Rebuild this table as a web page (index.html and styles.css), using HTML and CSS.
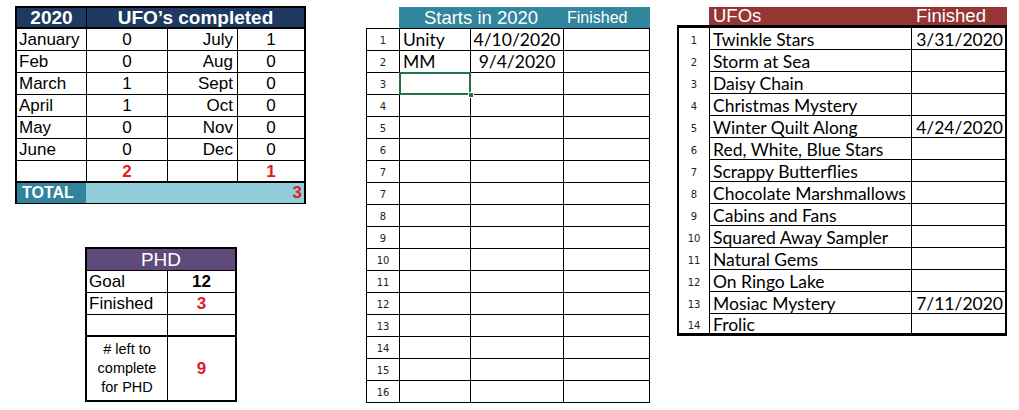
FILE: index.html
```html
<!DOCTYPE html>
<html lang="en">
<head>
<meta charset="utf-8">
<title>UFO tracker 2020</title>
<link rel="stylesheet" href="styles.css">
</head>
<body>
<main class="page">
  <div class="left">
    <section class="ufo-table">
      <div class="cell hd">2020</div>
      <div class="cell hd title">UFO’s completed</div>

      <div class="cell">January</div><div class="cell c">0</div><div class="cell r">July</div><div class="cell c">1</div>
      <div class="cell">Feb</div><div class="cell c">0</div><div class="cell r">Aug</div><div class="cell c">0</div>
      <div class="cell">March</div><div class="cell c">1</div><div class="cell r">Sept</div><div class="cell c">0</div>
      <div class="cell">April</div><div class="cell c">1</div><div class="cell r">Oct</div><div class="cell c">0</div>
      <div class="cell">May</div><div class="cell c">0</div><div class="cell r">Nov</div><div class="cell c">0</div>
      <div class="cell">June</div><div class="cell c">0</div><div class="cell r">Dec</div><div class="cell c">0</div>
      <div class="cell sub"></div><div class="cell sub c red">2</div><div class="cell sub"></div><div class="cell sub c red">1</div>

      <div class="total">
        <div class="total-label">TOTAL</div>
        <div class="total-val red">3</div>
      </div>
    </section>

    <section class="phd">
      <div class="cell phd-hd">PHD</div>
      <div class="cell">Goal</div><div class="cell c bold">12</div>
      <div class="cell">Finished</div><div class="cell c red">3</div>
      <div class="cell sub"></div><div class="cell sub"></div>
      <div class="cell c multi">#&nbsp;left to<br>complete<br>for PHD</div><div class="cell c red">9</div>
    </section>
  </div>

  <div class="mid">
    <div class="mid-head">
      <div class="mid-h1">Starts in 2020</div>
      <div class="mid-h2">Finished</div>
    </div>
    <section class="mid-body">
      <div class="n">1</div><div class="t">Unity</div><div class="t c">4/10/2020</div><div class="t"></div>
      <div class="n">2</div><div class="t">MM</div><div class="t c">9/4/2020</div><div class="t"></div>
      <div class="n">3</div><div class="t sel"></div><div class="t"></div><div class="t"></div>
      <div class="n">4</div><div class="t"></div><div class="t"></div><div class="t"></div>
      <div class="n">5</div><div class="t"></div><div class="t"></div><div class="t"></div>
      <div class="n">6</div><div class="t"></div><div class="t"></div><div class="t"></div>
      <div class="n">7</div><div class="t"></div><div class="t"></div><div class="t"></div>
      <div class="n">7</div><div class="t"></div><div class="t"></div><div class="t"></div>
      <div class="n">8</div><div class="t"></div><div class="t"></div><div class="t"></div>
      <div class="n">9</div><div class="t"></div><div class="t"></div><div class="t"></div>
      <div class="n">10</div><div class="t"></div><div class="t"></div><div class="t"></div>
      <div class="n">11</div><div class="t"></div><div class="t"></div><div class="t"></div>
      <div class="n">12</div><div class="t"></div><div class="t"></div><div class="t"></div>
      <div class="n">13</div><div class="t"></div><div class="t"></div><div class="t"></div>
      <div class="n">14</div><div class="t"></div><div class="t"></div><div class="t"></div>
      <div class="n">15</div><div class="t"></div><div class="t"></div><div class="t"></div>
      <div class="n">16</div><div class="t"></div><div class="t"></div><div class="t"></div>
    </section>
  </div>

  <div class="rt">
    <div class="rt-head">
      <div class="rt-h1">UFOs</div>
      <div class="rt-h2">Finished</div>
    </div>
    <section class="rt-body">
      <div class="rn">1</div><div class="rc">Twinkle Stars</div><div class="rc rd">3/31/2020</div>
      <div class="rn">2</div><div class="rc">Storm at Sea</div><div class="rc rd"></div>
      <div class="rn">3</div><div class="rc">Daisy Chain</div><div class="rc rd"></div>
      <div class="rn">4</div><div class="rc">Christmas Mystery</div><div class="rc rd"></div>
      <div class="rn">5</div><div class="rc">Winter Quilt Along</div><div class="rc rd">4/24/2020</div>
      <div class="rn">6</div><div class="rc">Red, White, Blue Stars</div><div class="rc rd"></div>
      <div class="rn">7</div><div class="rc">Scrappy Butterflies</div><div class="rc rd"></div>
      <div class="rn">8</div><div class="rc">Chocolate Marshmallows</div><div class="rc rd"></div>
      <div class="rn">9</div><div class="rc">Cabins and Fans</div><div class="rc rd"></div>
      <div class="rn">10</div><div class="rc">Squared Away Sampler</div><div class="rc rd"></div>
      <div class="rn">11</div><div class="rc">Natural Gems</div><div class="rc rd"></div>
      <div class="rn">12</div><div class="rc">On Ringo Lake</div><div class="rc rd"></div>
      <div class="rn">13</div><div class="rc">Mosiac Mystery</div><div class="rc rd">7/11/2020</div>
      <div class="rn last">14</div><div class="rc last">Frolic</div><div class="rc rd last"></div>
    </section>
  </div>
</main>
</body>
</html>
```

FILE: styles.css
```css
html, body {
  margin: 0;
  padding: 0;
  background: #fff;
}

body {
  font-family: "Liberation Sans", Arial, sans-serif;
  color: #000;
}

.page {
  display: flex;
  align-items: flex-start;
}

/* ---------- left column ---------- */
.left {
  display: flex;
  flex-direction: column;
  align-items: flex-start;
  margin-left: 15px;
  margin-top: 6px;
}

.cell {
  background: #fff;
  display: flex;
  align-items: center;
  padding: 0 2px;
  font-size: 17px;
  line-height: 1;
  white-space: nowrap;
  overflow: hidden;
  box-sizing: border-box;
}

.cell.c { justify-content: center; }
.cell.r { justify-content: flex-end; padding-right: 4px; }
.red { color: #e31b23; font-weight: bold; }
.bold { font-weight: bold; }

.ufo-table {
  display: grid;
  grid-template-columns: 69px 80px 69px 66px;
  grid-template-rows: 20px repeat(7, 21px) 19px;
  gap: 1px;
  background: #000;
  border: 2px solid #000;
}

.hd {
  background: #1f3a60;
  color: #fff;
  font-weight: bold;
  font-size: 19px;
  justify-content: center;
  border-bottom: 1px solid #000;
}

.hd.title {
  grid-column: 2 / 5;
}

.sub {
  border-bottom: 1px solid #000;
}

.total {
  grid-column: 1 / -1;
  display: grid;
  grid-template-columns: 69px 1fr;
}

.total-label {
  background: #31849b;
  color: #fff;
  font-weight: bold;
  font-size: 16px;
  display: flex;
  align-items: center;
  padding-left: 5px;
}

.total-val {
  background: #92cddc;
  display: flex;
  align-items: center;
  justify-content: flex-end;
  padding-right: 2px;
  font-size: 17px;
}

.phd {
  display: grid;
  grid-template-columns: 80px 67px;
  grid-template-rows: 21px 21px 21px 21px 63px;
  gap: 1px;
  background: #000;
  border: 2px solid #000;
  margin: 43px 0 0 70px;
}

.phd-hd {
  grid-column: 1 / -1;
  background: #604a7b;
  color: #fff;
  font-size: 19px;
  justify-content: center;
}

.multi {
  white-space: normal;
  text-align: center;
  font-size: 14.5px;
  line-height: 19px;
}

/* ---------- middle table ---------- */
.mid {
  margin-left: 60px;
  margin-top: 7px;
}

.mid-head {
  display: grid;
  grid-template-columns: 164px 86px;
  margin-left: 33px;
  height: 21px;
  background: #31859c;
  color: #fff;
}

.mid-h1 {
  font-size: 18.5px;
  display: flex;
  align-items: center;
  justify-content: center;
}

.mid-h2 {
  font-size: 16px;
  display: flex;
  align-items: center;
  padding-left: 4px;
}

.mid-body {
  display: grid;
  grid-template-columns: 32px 70px 92px 85px;
  grid-auto-rows: 21px;
  gap: 1px;
  background: #000;
  border: 1px solid #000;
}

.n, .rn {
  background: #fff;
  font-family: "DejaVu Sans", Verdana, sans-serif;
  font-size: 10px;
  color: #222;
  display: flex;
  align-items: center;
  justify-content: center;
  padding-top: 2px;
  box-sizing: border-box;
}

.t {
  background: #fff;
  font-family: Lato, "Liberation Sans", sans-serif;
  font-size: 17.5px;
  display: flex;
  align-items: center;
  padding-left: 3px;
  white-space: nowrap;
}

.t.c {
  justify-content: center;
  padding-left: 0;
}

.sel {
  position: relative;
}

.sel::before {
  content: "";
  position: absolute;
  left: -1px;
  top: -1px;
  right: -1px;
  bottom: -1px;
  border: 2px solid #217346;
  z-index: 1;
}

.sel::after {
  content: "";
  position: absolute;
  right: -4px;
  bottom: -4px;
  width: 6px;
  height: 6px;
  background: #217346;
  border: 1px solid #fff;
  box-sizing: border-box;
  z-index: 2;
}

/* ---------- right table ---------- */
.rt {
  margin-left: 27px;
  margin-top: 7px;
}

.rt-head {
  display: grid;
  grid-template-columns: 202px 96px;
  margin-left: 32px;
  height: 18px;
  background: #963634;
  color: #fff;
  font-size: 18.5px;
  line-height: 18px;
}

.rt-h1 { padding-left: 4px; }
.rt-h2 { padding-left: 5px; }

.rt-body {
  display: grid;
  grid-template-columns: 30px 202px 94px;
  grid-template-rows: repeat(13, 22px) 19px;
  border: 3px solid #000;
  border-left-width: 2px;
  border-right-width: 2px;
}

.rn {
  padding-top: 3px;
}

.rc {
  font-family: Lato, "Liberation Sans", sans-serif;
  font-size: 17.5px;
  display: flex;
  align-items: center;
  padding-left: 3px;
  padding-top: 1px;
  border-left: 1px solid #000;
  border-bottom: 1px solid #000;
  white-space: nowrap;
  box-sizing: border-box;
}

.rc.last {
  border-bottom: none;
}

.rd {
  justify-content: flex-end;
  padding-left: 0;
  padding-right: 2px;
}
```
